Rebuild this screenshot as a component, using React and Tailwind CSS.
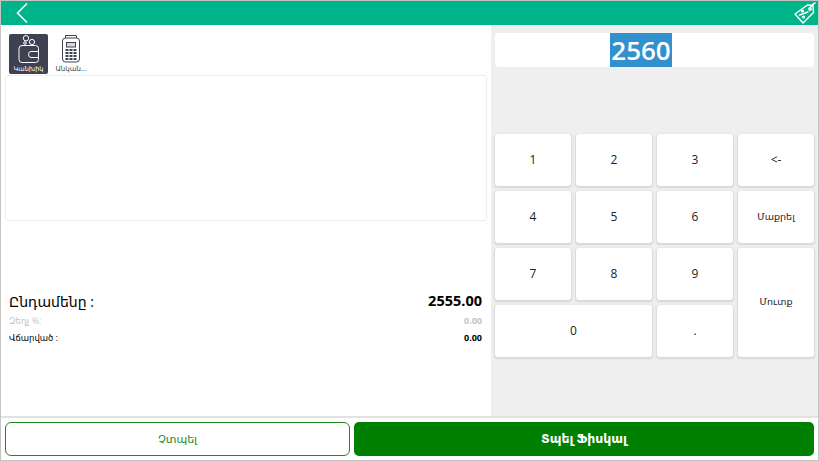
import React from 'react';

const font = { fontFamily: '"Open Sans", "DejaVu Sans", sans-serif' };

const BackIcon = () => (
  <svg width="14" height="22" viewBox="0 0 14 22" fill="none" stroke="white" strokeWidth="1.6">
    <path d="M12 1.5 L2.5 11 L12 20.5" />
  </svg>
);

const TagIcon = () => (
  <svg width="24" height="24" viewBox="0 0 24 24" fill="none" stroke="white" strokeWidth="1.4" strokeLinejoin="round" strokeLinecap="round">
    <path d="M2 13 L14.5 4 L20 4.5 L20.5 11.5 L10 22 Z" />
    <circle cx="17" cy="8" r="1.2" />
    <path d="M17 7 Q18.5 3.5 22 2" />
    <path d="M6.5 14 L15 11" />
    <circle cx="9.5" cy="10" r="0.9" />
    <circle cx="10.5" cy="16" r="0.9" />
  </svg>
);

const WalletIcon = () => (
  <svg width="22" height="28" viewBox="0 0 22 28" fill="none" stroke="white" strokeWidth="1">
    <circle cx="8" cy="3.2" r="2.7" />
    <circle cx="14" cy="7" r="2.6" />
    <circle cx="7" cy="8" r="1.3" />
    <rect x="1" y="10.5" width="19.5" height="17" rx="3" />
    <path d="M20.5 16.5 H13 Q10.5 16.5 10.5 19.5 Q10.5 22.5 13 22.5 H20.5" />
  </svg>
);

const TerminalIcon = () => (
  <svg width="20" height="28" viewBox="0 0 20 28" fill="none" stroke="#3d4152" strokeWidth="1">
    <path d="M4.5 3 V0.5 H15.5 V3" />
    <rect x="1.5" y="3" width="17" height="24" rx="3" />
    <rect x="5.5" y="7.5" width="9" height="4.5" fill="#d5d7dc" />
    {[14, 17, 20, 23].map((y) => (
      <g key={y} fill="#3d4152" stroke="none">
        <rect x="4.5" y={y} width="3" height="2" />
        <rect x="8.5" y={y} width="3" height="2" />
        <rect x="12.5" y={y} width="3" height="2" />
      </g>
    ))}
  </svg>
);

const Key = ({ children, className = '' }) => (
  <button className={`bg-white rounded-[3px] shadow-[0_1px_2px_1px_rgba(0,0,0,0.1)] text-[#222] flex items-center justify-center ${className}`}>
    {children}
  </button>
);

const keys = [
  ['1', 'text-[12px]'], ['2', 'text-[12px]'], ['3', 'text-[12px]'], ['<-', 'text-[12px]'],
  ['4', 'text-[12px]'], ['5', 'text-[12px]'], ['6', 'text-[12px]'], ['Մաքրել', 'text-[9.5px]'],
  ['7', 'text-[12px]'], ['8', 'text-[12px]'], ['9', 'text-[12px]'], ['Մուտք', 'text-[9.5px] row-span-2'],
  ['0', 'text-[12px] col-span-2'], ['.', 'text-[12px]'],
];

export default function App() {
  return (
    <div style={font} className="w-[819px] h-[461px] bg-white border border-[#c4c4c4] flex flex-col overflow-hidden">
      {/* top bar */}
      <div className="h-[24px] shrink-0 bg-[#00b48a] flex items-center justify-between pl-[14px] pr-[1px]">
        <BackIcon />
        <TagIcon />
      </div>

      <div className="flex-1 flex min-h-0">
        {/* left side */}
        <div className="w-[490px] shrink-0 flex flex-col">
          <div className="flex gap-[4px] pl-[8px] pt-[9px] h-[50px]">
            <div className="w-[39px] h-[40px] bg-[#3d4152] rounded-[2px] flex flex-col items-center pt-[1px]">
              <WalletIcon />
              <span className="text-[6.5px] leading-[9px] text-white mt-[1px]">Կանխիկ</span>
            </div>
            <div className="w-[38px] h-[40px] flex flex-col items-center pt-[1px]">
              <TerminalIcon />
              <span className="text-[7px] leading-[9px] text-[#444] mt-[1px]">Անկան...</span>
            </div>
          </div>
          <div className="ml-[4px] w-[482px] h-[146px] border border-[#eeeeee] rounded-[3px] shadow-[0_0_1px_rgba(0,0,0,0.08)]" />
          <div className="pl-[8px] pr-[9px] pt-[70px] flex flex-col">
            <div className="flex items-center justify-between h-[20px] text-black">
              <span className="text-[14px]">Ընդամենը :</span>
              <span className="text-[14.5px] font-bold">2555.00</span>
            </div>
            <div className="flex items-center justify-between h-[18px] mt-[1px] text-[#c4c4c4] text-[8.5px]">
              <span>Զեղչ %:</span>
              <span className="text-[9px] font-bold">0.00</span>
            </div>
            <div className="flex items-center justify-between h-[16px] text-black text-[8.5px]">
              <span>Վճարված :</span>
              <span className="text-[9px] font-bold">0.00</span>
            </div>
          </div>
        </div>

        {/* right side */}
        <div className="flex-1 bg-[#efefef] pl-[4px] pr-[4px] pt-[8px] flex flex-col">
          <div className="h-[34px] bg-white rounded-[4px] flex justify-center pr-[27px]">
            <span className="bg-[#3390cf] text-white text-[26px] font-semibold leading-[34px] px-[1px]">2560</span>
          </div>
          <div className="grid grid-cols-4 grid-rows-[repeat(4,52px)] gap-[5px] mt-[67px]">
            {keys.map(([label, cls]) => (
              <Key key={label} className={cls}>
                {label}
              </Key>
            ))}
          </div>
        </div>
      </div>

      {/* bottom buttons */}
      <div className="h-[44px] shrink-0 border-t-2 border-[#e2e2e2] flex gap-[4px] pl-[4px] pr-[4px] pt-[4px]">
        <button className="w-[345px] h-[34px] bg-white border border-[#1f8a1f] rounded-[6px] text-[#1f8a1f] text-[11px]">Չտպել</button>
        <button className="flex-1 h-[34px] bg-[#008000] rounded-[5px] text-white text-[12.5px] font-semibold">Տպել Ֆիսկալ</button>
      </div>
    </div>
  );
}
